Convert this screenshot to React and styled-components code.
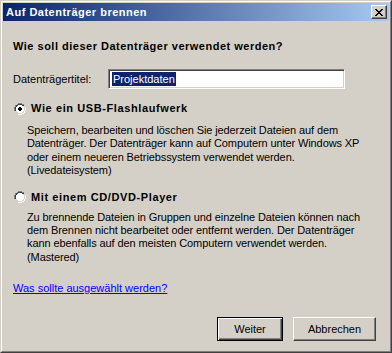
import React from 'react';
import styled, { createGlobalStyle } from 'styled-components';

const GlobalStyle = createGlobalStyle`
  html, body {
    margin: 0;
    padding: 0;
    background: #d4d0c8;
  }
  body {
    font-family: "Liberation Sans", Arial, sans-serif;
    font-size: 11px;
    color: #000;
  }
`;

const Window = styled.div`
  width: 392px;
  height: 353px;
  box-sizing: border-box;
  background: #d4d0c8;
  border: 1px solid;
  border-color: #d4d0c8 #404040 #404040 #d4d0c8;
  display: flex;
  flex-direction: column;
`;

const Frame = styled.div`
  flex: 1;
  min-height: 0;
  border: 1px solid;
  border-color: #ffffff #808080 #808080 #ffffff;
  padding: 1px;
  display: flex;
  flex-direction: column;
`;

const TitleBar = styled.div`
  height: 18px;
  flex-shrink: 0;
  background: linear-gradient(to right, #0a246a, #a6caf0);
  display: flex;
  align-items: center;
  justify-content: space-between;
  padding: 0 2px 0 3px;
`;

const Title = styled.span`
  color: #fff;
  font-weight: bold;
  font-size: 11px;
  letter-spacing: 0.5px;
`;

const CloseButton = styled.div`
  width: 16px;
  height: 14px;
  box-sizing: border-box;
  background: #d4d0c8;
  border: 1px solid;
  border-color: #ffffff #404040 #404040 #ffffff;
  box-shadow: inset -1px -1px 0 #808080;
  display: flex;
  align-items: center;
  justify-content: center;
`;

const Content = styled.div`
  flex: 1;
  min-height: 0;
  display: flex;
  flex-direction: column;
  padding: 19px 10px 0 10px;
`;

const Heading = styled.div`
  font-weight: bold;
  line-height: 13px;
  letter-spacing: 0.5px;
`;

const TitleRow = styled.div`
  display: flex;
  align-items: center;
  margin-top: 16px;
`;

const Label = styled.span`
  width: 95px;
`;

const TextField = styled.div`
  width: 237px;
  height: 20px;
  box-sizing: border-box;
  background: #fff;
  border: 1px solid;
  border-color: #808080 #ffffff #ffffff #808080;
  box-shadow: inset 1px 1px 0 #404040, inset -1px -1px 0 #d4d0c8;
  display: flex;
  align-items: center;
  padding-left: 3px;
`;

const Selected = styled.span`
  background: #0a246a;
  color: #fff;
  line-height: 14px;
  padding: 0 1px;
`;

const OptionRow = styled.div`
  display: flex;
  align-items: center;
  gap: 5px;
  margin-top: ${p => p.$top}px;
  padding-left: 1px;
  font-weight: bold;
  line-height: 13px;
  letter-spacing: 0.6px;
`;

const Description = styled.p`
  margin: ${p => p.$top}px 0 0 14px;
  line-height: 13.4px;
  white-space: nowrap;
  letter-spacing: -0.1px;
`;

const HelpLink = styled.a`
  color: #0000ff;
  text-decoration: underline;
  margin-top: 18px;
  line-height: 13px;
  align-self: flex-start;
`;

const ButtonRow = styled.div`
  display: flex;
  justify-content: flex-end;
  gap: 10px;
  margin-top: auto;
  margin-bottom: 9px;
  padding-right: 3px;
`;

const Button = styled.div`
  width: ${p => p.$width}px;
  height: 24px;
  box-sizing: border-box;
  border: 1px solid;
  border-color: ${p => (p.$default ? '#000' : '#fff #404040 #404040 #fff')};
  box-shadow: ${p =>
    p.$default
      ? 'inset 1px 1px 0 #fff, inset -1px -1px 0 #404040, inset -2px -2px 0 #808080'
      : 'inset -1px -1px 0 #808080'};
  display: flex;
  align-items: center;
  justify-content: center;
  background: #d4d0c8;
`;

const Radio = ({ checked }) => (
  <svg width="12" height="12" viewBox="0 0 12 12" shapeRendering="crispEdges">
    <path d="M4 0h4v1h2v1h-2v-1h-4v1h-2v2h-1v4h-1v-4h1v-2h2z" fill="#808080" />
    <path d="M4 1h4v1h2v1h-2v-1h-4v1h-1v1h-1v4h-1v-4h1v-2h2z" fill="#404040" />
    <path d="M11 4h1v4h-1v2h-1v1h-2v1h-4v-1h4v-1h2v-2h1z" fill="#ffffff" />
    <path d="M10 4h1v4h-1v2h-2v1h-4v-1h4v-1h1v-1h1z" fill="#d4d0c8" />
    <path d="M4 2h4v1h1v1h1v4h-1v1h-1v1h-4v-1h-1v-1h-1v-4h1v-1h1z" fill="#ffffff" />
    {checked && <path d="M5 4h2v1h1v2h-1v1h-2v-1h-1v-2h1z" fill="#000" />}
  </svg>
);

const App = () => (
  <>
    <GlobalStyle />
    <Window>
      <Frame>
        <TitleBar>
          <Title>Auf Datenträger brennen</Title>
          <CloseButton>
            <svg width="8" height="7" viewBox="0 0 8 7" shapeRendering="crispEdges">
              <path d="M0 0h2v1h1v1h2v-1h1v-1h2v1h-1v1h-1v1h-1v1h1v1h1v1h1v1h-2v-1h-1v-1h-2v1h-1v1h-2v-1h1v-1h1v-1h1v-1h-1v-1h-1v-1h-1z" fill="#000" />
            </svg>
          </CloseButton>
        </TitleBar>
        <Content>
          <Heading>Wie soll dieser Datenträger verwendet werden?</Heading>
          <TitleRow>
            <Label>Datenträgertitel:</Label>
            <TextField>
              <Selected>Projektdaten</Selected>
            </TextField>
          </TitleRow>
          <OptionRow $top={13}>
            <Radio checked />
            Wie ein USB-Flashlaufwerk
          </OptionRow>
          <Description $top={9}>
            Speichern, bearbeiten und löschen Sie jederzeit Dateien auf dem
            <br />
            Datenträger. Der Datenträger kann auf Computern unter Windows XP
            <br />
            oder einem neueren Betriebssystem verwendet werden.
            <br />
            (Livedateisystem)
          </Description>
          <OptionRow $top={13}>
            <Radio />
            Mit einem CD/DVD-Player
          </OptionRow>
          <Description $top={7}>
            Zu brennende Dateien in Gruppen und einzelne Dateien können nach
            <br />
            dem Brennen nicht bearbeitet oder entfernt werden. Der Datenträger
            <br />
            kann ebenfalls auf den meisten Computern verwendet werden.
            <br />
            (Mastered)
          </Description>
          <HelpLink href="#">Was sollte ausgewählt werden?</HelpLink>
          <ButtonRow>
            <Button $width={66} $default>Weiter</Button>
            <Button $width={83}>Abbrechen</Button>
          </ButtonRow>
        </Content>
      </Frame>
    </Window>
  </>
);

export default App;
